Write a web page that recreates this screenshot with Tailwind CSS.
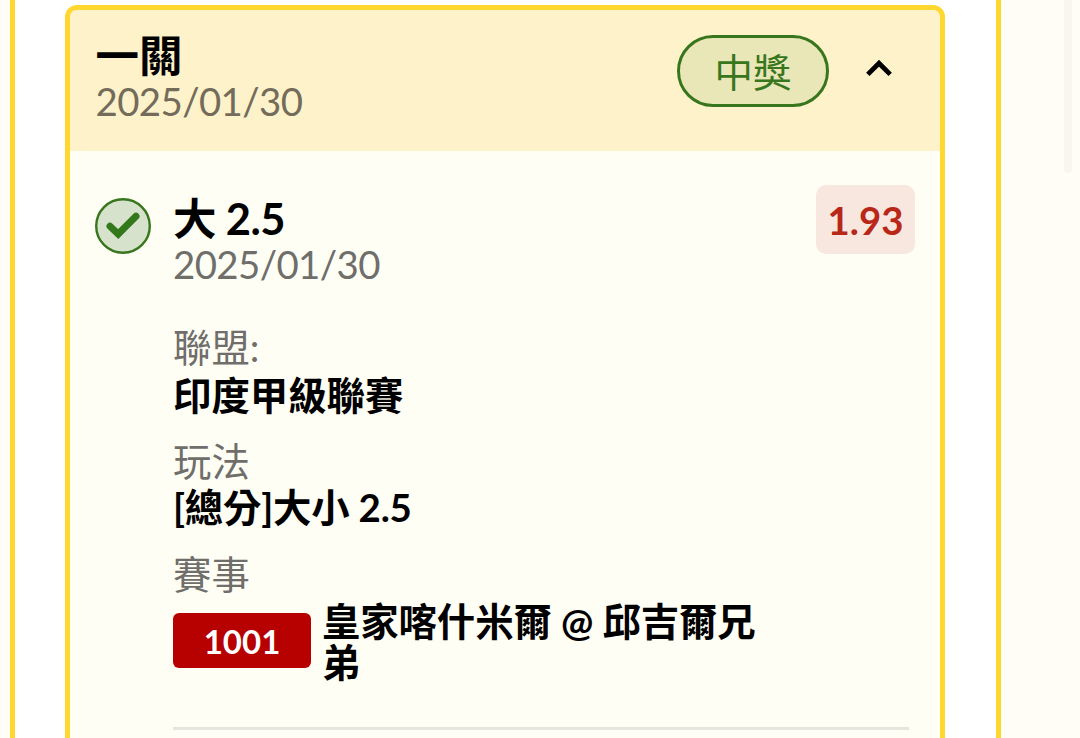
<!DOCTYPE html>
<html lang="zh-Hant">
<head>
  <meta charset="UTF-8" />
  <meta name="viewport" content="width=device-width, initial-scale=1.0"/>
  <title>投注紀錄</title>
  <script src="https://cdn.jsdelivr.net/npm/@tailwindcss/browser@4"></script>
</head>
<body class="h-screen overflow-hidden bg-[#fffdf5] font-['Lato','Noto_Sans_CJK_TC',sans-serif] text-[38.4px] leading-[46px] text-black">
  <div class="flex h-[738px]">
    <div class="ml-[9.5px] w-[991px] shrink-0 border-x-[5px] border-[#ffd72e] bg-white pl-[50.5px] pt-[5px]">
      <div class="h-[760px] w-[880px] overflow-hidden rounded-xl border-[5px] border-[#ffd72e] bg-[#fffef5]">

        <!-- header -->
        <div class="flex h-[141px] items-start bg-[#fef2cb] pl-[25.5px] pt-[23px]">
          <div class="w-[581.5px]">
            <h1 class="text-[43.5px] leading-[44px] font-bold">一關</h1>
            <div class="mt-px tracking-[-0.6px] text-[#736c5a]">2025/01/30</div>
          </div>
          <div class="mt-0.5 flex h-[72px] w-[152px] items-center justify-center rounded-full border-[3px] border-[#38761d] bg-[#e9e6b8] pt-0.5 text-[#38761d]">中獎</div>
          <svg class="ml-9 mt-[25px] h-5 w-7" viewBox="0 0 28 20" fill="none" stroke="#000" stroke-width="4.8">
            <path d="M2.8 16.4 14 5.2l11.2 11.2"/>
          </svg>
        </div>

        <!-- bet -->
        <div class="flex items-start pl-[25px] pt-[34px]">
          <svg class="mt-[13px] h-14 w-14 shrink-0" viewBox="0 0 56 56" fill="none" stroke="#38761d">
            <circle cx="28" cy="28" r="26.8" fill="#d7e2cc" stroke-width="2.4"/>
            <path d="M15 28.2 23.2 36 41 18.2" stroke="#34781c" stroke-width="7" stroke-linecap="round"/>
          </svg>
          <div class="ml-[22px] w-[736px]">
            <div class="flex items-start justify-between">
              <div class="pt-[11px]">
                <div class="text-[43.5px] leading-[45px] font-bold tracking-[-0.6px]">大 2.5</div>
                <div class="tracking-[-0.6px] text-[#6f6e6b]">2025/01/30</div>
              </div>
              <div class="-mr-[6px] flex h-[69px] w-[99px] items-center justify-center rounded-[10px] bg-[#f8e7df] font-bold text-[#b92719]">1.93</div>
            </div>

            <div class="mt-[37px] leading-[47px] text-[#6f6e6b]">聯盟:</div>
            <div class="mt-px font-bold">印度甲級聯賽</div>
            <div class="mt-5 leading-[47px] text-[#6f6e6b]">玩法</div>
            <div class="-mt-px font-bold tracking-[-0.2px]">[總分]大小 2.5</div>
            <div class="mt-[21px] leading-[47px] text-[#6f6e6b]">賽事</div>
            <div class="mt-0.5 flex items-start">
              <div class="mt-[13px] flex h-[55px] w-[138px] shrink-0 items-center justify-center rounded-md bg-[#b70000] text-[33px] font-bold text-white">1001</div>
              <div class="ml-[11px] mt-px w-[440px] leading-[41px] font-bold tracking-[-0.1px]">皇家喀什米爾 @ 邱吉爾兄弟</div>
            </div>
            <div class="mt-11 h-[3px] bg-[#e8e5df]"></div>
          </div>
        </div>
      </div>
    </div>

    <!-- scroll thumb -->
    <div class="ml-[63.5px] h-[173px] w-2 rounded-b-full bg-[#f9f5ef]"></div>
  </div>
</body>
</html>
